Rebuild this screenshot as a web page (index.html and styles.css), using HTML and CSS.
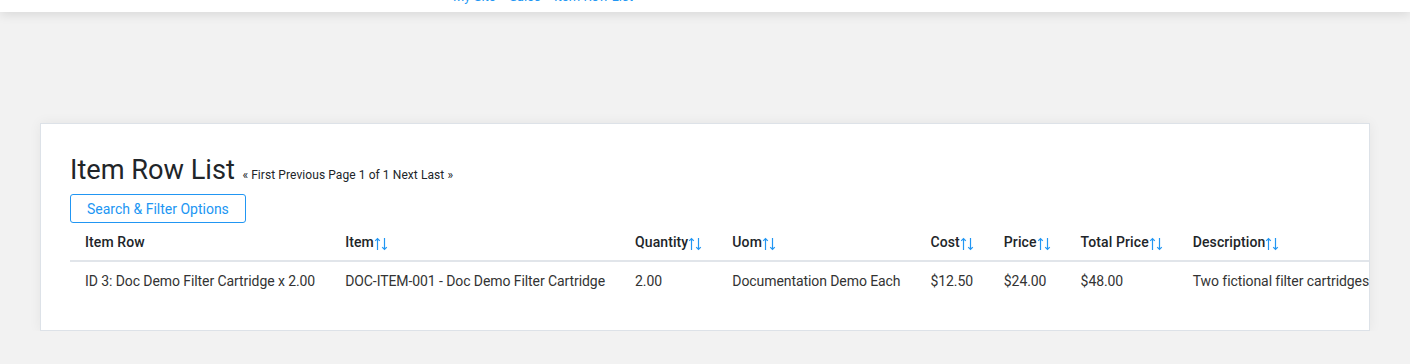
FILE: index.html
```html
<!DOCTYPE html>
<html>
<head>
    <meta charset="UTF-8">
    <meta name="viewport" content="width=device-width, initial-scale=1.0">
    <title>Item Row List</title>
    <link rel="stylesheet" href="styles.css">
</head>
<body>
    <div class="topbar">
        <div class="breadcrumb">
            <a href="#">My Site</a>
            <span class="sep">›</span>
            <a href="#">Sales</a>
            <span class="sep">›</span>
            <a href="#">Item Row List</a>
        </div>
    </div>

    <div class="main">
        <div class="card">
            <div class="list-title">
                <h1>Item Row List</h1>
                <span class="pager">« First Previous Page 1 of 1 Next Last »</span>
            </div>
            <button class="filter-btn">Search &amp; Filter Options</button>

            <table class="rows">
                <thead>
                    <tr>
                        <th>Item Row</th>
                        <th>Item<svg class="sort" viewBox="0 0 14 14"><path d="M3.5 13V1.5M1.2 3.8L3.5 1.5L5.8 3.8M10.5 1V12.5M8.2 10.2L10.5 12.5L12.8 10.2"/></svg></th>
                        <th>Quantity<svg class="sort" viewBox="0 0 14 14"><path d="M3.5 13V1.5M1.2 3.8L3.5 1.5L5.8 3.8M10.5 1V12.5M8.2 10.2L10.5 12.5L12.8 10.2"/></svg></th>
                        <th>Uom<svg class="sort" viewBox="0 0 14 14"><path d="M3.5 13V1.5M1.2 3.8L3.5 1.5L5.8 3.8M10.5 1V12.5M8.2 10.2L10.5 12.5L12.8 10.2"/></svg></th>
                        <th>Cost<svg class="sort" viewBox="0 0 14 14"><path d="M3.5 13V1.5M1.2 3.8L3.5 1.5L5.8 3.8M10.5 1V12.5M8.2 10.2L10.5 12.5L12.8 10.2"/></svg></th>
                        <th>Price<svg class="sort" viewBox="0 0 14 14"><path d="M3.5 13V1.5M1.2 3.8L3.5 1.5L5.8 3.8M10.5 1V12.5M8.2 10.2L10.5 12.5L12.8 10.2"/></svg></th>
                        <th>Total Price<svg class="sort" viewBox="0 0 14 14"><path d="M3.5 13V1.5M1.2 3.8L3.5 1.5L5.8 3.8M10.5 1V12.5M8.2 10.2L10.5 12.5L12.8 10.2"/></svg></th>
                        <th>Description<svg class="sort" viewBox="0 0 14 14"><path d="M3.5 13V1.5M1.2 3.8L3.5 1.5L5.8 3.8M10.5 1V12.5M8.2 10.2L10.5 12.5L12.8 10.2"/></svg></th>
                    </tr>
                </thead>
                <tbody>
                    <tr>
                        <td>ID 3: Doc Demo Filter Cartridge x 2.00</td>
                        <td>DOC-ITEM-001 - Doc Demo Filter Cartridge</td>
                        <td>2.00</td>
                        <td>Documentation Demo Each</td>
                        <td>$12.50</td>
                        <td>$24.00</td>
                        <td>$48.00</td>
                        <td>Two fictional filter cartridges for the documentation demo</td>
                    </tr>
                </tbody>
            </table>
        </div>
    </div>
</body>
</html>
```

FILE: styles.css
```css
body {
    margin: 0;
    font-family: Roboto, "Liberation Sans", Arial, sans-serif;
    font-size: 14px;
    color: #212529;
    background-color: #f2f2f2;
}

a {
    color: #2196f3;
    text-decoration: none;
}

.topbar {
    height: 12px;
    overflow: hidden;
    background-color: #fff;
    box-shadow: 0 2px 12px rgba(0, 0, 0, 0.12);
    position: relative;
}

.breadcrumb {
    margin-top: -12px;
    padding-left: 453px;
    font-size: 13px;
    line-height: 18px;
    white-space: nowrap;
}

.breadcrumb .sep {
    color: #999;
    margin: 0 1.5px;
}

.main {
    padding: 111px 40px 0;
}

.card {
    background-color: #fff;
    border: 1px solid #dde2e8;
    box-shadow: 0 0 12px rgba(0, 0, 0, 0.06);
    padding: 29px 0 30px 29px;
    overflow: hidden;
}

.list-title {
    white-space: nowrap;
}

.list-title h1 {
    display: inline;
    margin: 0;
    font-size: 27.2px;
    font-weight: 400;
    line-height: 34px;
}

.pager {
    font-size: 12px;
    margin-left: 4px;
    letter-spacing: 0.08px;
}

.filter-btn {
    display: block;
    margin-top: 7px;
    height: 29px;
    padding: 0 16px;
    font-family: inherit;
    font-size: 14px;
    color: #2196f3;
    background-color: #fff;
    border: 1px solid #2196f3;
    border-radius: 3px;
    cursor: pointer;
}

.rows {
    border-collapse: collapse;
    white-space: nowrap;
}

.rows th {
    text-align: left;
    font-weight: 500;
    padding: 10px 15px 9px;
    line-height: 18px;
    letter-spacing: 0.1px;
    border-bottom: 2px solid #e1e5ea;
}

.rows td {
    padding: 10px 15px;
    line-height: 18px;
    color: #333;
    letter-spacing: -0.08px;
}

.sort {
    width: 14px;
    height: 14px;
    vertical-align: -4px;
    fill: none;
    stroke: #2196f3;
    stroke-width: 1.2;
}
```
